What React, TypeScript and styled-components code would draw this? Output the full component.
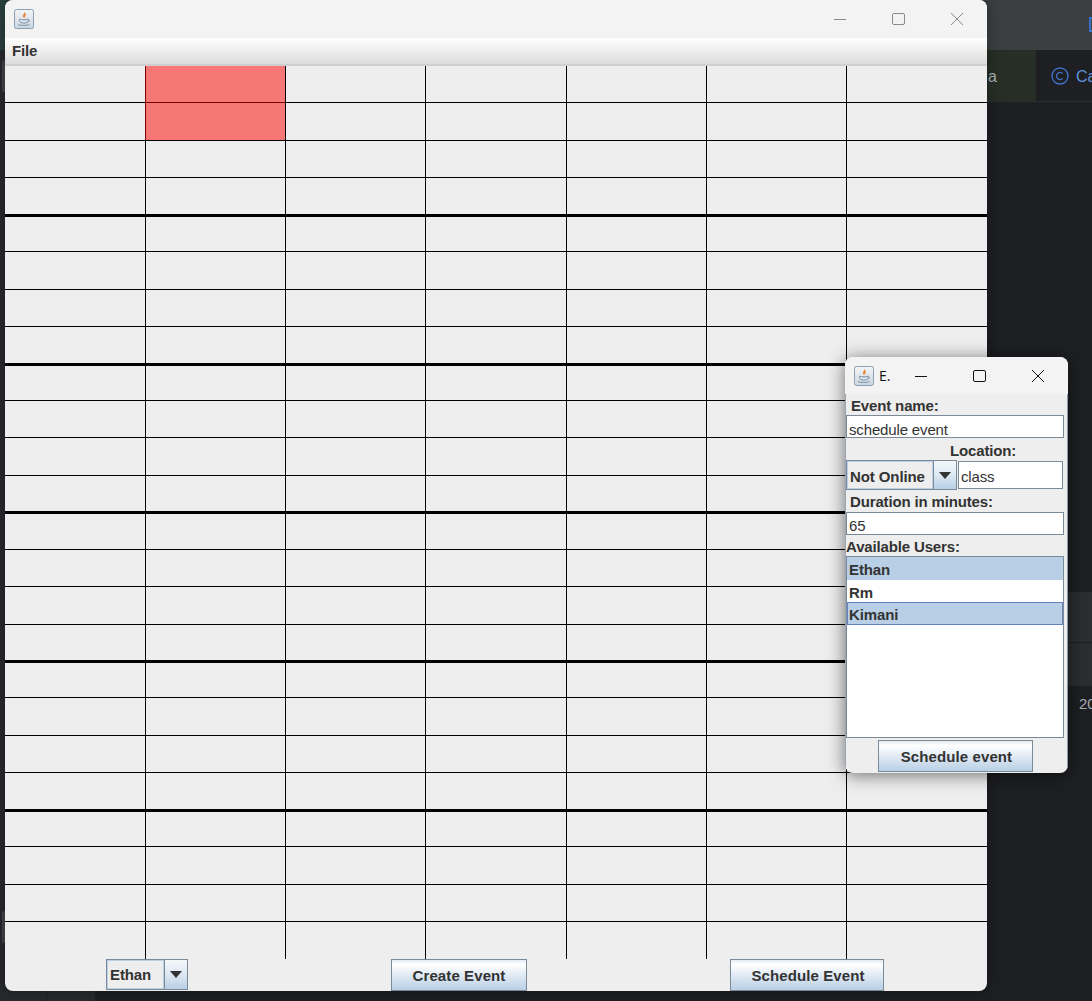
import React from 'react'
import styled, { createGlobalStyle } from 'styled-components'

const ROW_HEIGHTS = [37, 38, 37, 39, 35, 38, 37, 39, 35, 37, 38, 38, 36, 37, 38, 38, 35, 38, 37, 39, 35, 38, 37, 37]
const COLUMN_WIDTHS = [141, 140, 140, 141, 140, 140, 140]
const THICK_ROWS = [3, 7, 11, 15, 19]
const USERS = [
  { name: 'Ethan', height: 23, selected: true, focused: false },
  { name: 'Rm', height: 22, selected: false, focused: false },
  { name: 'Kimani', height: 23, selected: true, focused: true },
]

const JavaIcon: React.FC = () => (
  <IconBox width="20" height="20" viewBox="0 0 20 20">
    <defs>
      <linearGradient id="javaBg" x1="0" y1="0" x2="0" y2="1">
        <stop offset="0" stopColor="#f3f5f7" />
        <stop offset="1" stopColor="#ccd6df" />
      </linearGradient>
    </defs>
    <rect x="0.5" y="0.5" width="19" height="19" rx="2" fill="url(#javaBg)" stroke="#8ba0b4" />
    <path d="M10.5 2.5c.8 1.5-2 3-1.6 4.8.2.8.9 1.5 1.3 2-.1-1 1.8-2 1.7-3.6-.1-1.1-.9-2-1.4-3.2z" fill="#e8873a" />
    <path d="M5.5 10.2c2.5.8 6.5.8 8.8 0v1.3c0 1.6-2 2.7-4.4 2.7s-4.4-1.1-4.4-2.7z" fill="none" stroke="#7d93a8" strokeWidth="1" />
    <path d="M14.3 10.8c1.6-.2 1.9 1.6-.5 2.2" fill="none" stroke="#7d93a8" strokeWidth=".8" />
    <path d="M4 15.6c3 1.1 8.5 1.1 11.5 0" fill="none" stroke="#7d93a8" strokeWidth="1" />
  </IconBox>
)

const WindowControls: React.FC<{ $active?: boolean }> = ({ $active }) => {
  const stroke = $active ? '#111' : '#8a8a8a'
  return (
    <Controls>
      <svg width="14" height="14" viewBox="0 0 14 14">
        <path d="M0 7.5h12" stroke={stroke} strokeWidth="1" />
      </svg>
      <svg width="14" height="14" viewBox="0 0 14 14">
        <rect x="0.5" y="1.5" width="12" height="11" rx="1.5" fill="none" stroke={stroke} strokeWidth="1" />
      </svg>
      <svg width="14" height="14" viewBox="0 0 14 14">
        <path d="M1 1l12 12M13 1L1 13" stroke={stroke} strokeWidth="1" />
      </svg>
    </Controls>
  )
}

interface ComboBoxProps {
  label: string
  textWidth: number
  height: number
  textOffset?: number
}

const ComboBox: React.FC<ComboBoxProps> = ({ label, textWidth, height, textOffset = 0 }) => (
  <Combo $height={height}>
    <ComboText $width={textWidth} $offset={textOffset}>{label}</ComboText>
    <ComboArrow>
      <svg width="14" height="7" viewBox="0 0 14 7">
        <path d="M1 0h12L7 7z" fill="#333" />
      </svg>
    </ComboArrow>
  </Combo>
)

const App: React.FC = () => (
  <Desktop>
    <GlobalStyle />

    <IdeBackdrop>
      <IdeTop>
        <IdeTopMark />
      </IdeTop>
      <IdeBody>
        <IdeSideBar>
          <IdeScrollThumb />
          <IdeScrollThumb />
        </IdeSideBar>
        <IdeSecondBar />
        <IdeMain>
          <IdeTabs>
            <IdeTab $green>a</IdeTab>
            <IdeTab>
              <IdeTabIcon width="18" height="18" viewBox="0 0 18 18">
                <circle cx="9" cy="9" r="8" fill="none" stroke="#3f6fc4" strokeWidth="1.4" />
                <path d="M11.8 6.6a3.6 3.6 0 1 0 0 4.8" fill="none" stroke="#3f6fc4" strokeWidth="1.4" />
              </IdeTabIcon>
              <IdeTabName>Ca</IdeTabName>
            </IdeTab>
          </IdeTabs>
          <IdeEditor />
          <IdePanel />
          <IdePanel $ruled />
          <IdeLog>20</IdeLog>
        </IdeMain>
      </IdeBody>
    </IdeBackdrop>

    <MainWindow>
      <TitleBar $height={38}>
        <JavaIcon />
        <MainControls>
          <WindowControls />
        </MainControls>
      </TitleBar>
      <MenuBar>File</MenuBar>
      <CalendarGrid $rows={ROW_HEIGHTS} $columns={COLUMN_WIDTHS}>
        {ROW_HEIGHTS.map((_, row) =>
          COLUMN_WIDTHS.map((_, column) => (
            <Cell
              key={`${row}-${column}`}
              $thick={THICK_ROWS.includes(row)}
              $lastRow={row === ROW_HEIGHTS.length - 1}
              $lastColumn={column === COLUMN_WIDTHS.length - 1}
            />
          )),
        )}
        <EventBlock />
      </CalendarGrid>
      <Footer>
        <ComboBox label="Ethan" textWidth={57} height={31} />
        <PushButton $width={136}>Create Event</PushButton>
        <PushButton $width={154} $shift>Schedule Event</PushButton>
      </Footer>
    </MainWindow>

    <Dialog>
      <TitleBar $height={37}>
        <JavaIcon />
        <DialogTitle>E.</DialogTitle>
        <DialogControls>
          <WindowControls $active />
        </DialogControls>
      </TitleBar>
      <DialogBody>
        <FieldLabel $height={21} $indent={5}>Event name:</FieldLabel>
        <TextField $height={23} $top={5}>schedule event</TextField>
        <FieldLabel $height={22} $indent={104}>Location:</FieldLabel>
        <LocationRow>
          <ComboBox label="Not Online" textWidth={86} height={30} textOffset={2} />
          <TextField $height={28} $top={6} $grow>class</TextField>
        </LocationRow>
        <FieldLabel $height={22} $indent={4} $lift>Duration in minutes:</FieldLabel>
        <TextField $height={23} $top={4}>65</TextField>
        <FieldLabel $height={21} $indent={0}>Available Users:</FieldLabel>
        <UserList>
          {USERS.map((user) => (
            <UserRow key={user.name} $height={user.height} $selected={user.selected} $focused={user.focused}>
              {user.name}
            </UserRow>
          ))}
        </UserList>
        <DialogFooter>
          <PushButton $width={155} $shift>Schedule event</PushButton>
        </DialogFooter>
      </DialogBody>
    </Dialog>
  </Desktop>
)

export default App

const GlobalStyle = createGlobalStyle`
  html, body {
    margin: 0;
    padding: 0;
    background: #1e1f22;
    overflow: hidden;
  }
  * {
    box-sizing: border-box;
  }
`

const Desktop = styled.div`
  position: relative;
  width: 1092px;
  height: 1001px;
  overflow: hidden;
  font-family: 'Liberation Sans', Arial, sans-serif;
`

const IdeBackdrop = styled.div`
  display: flex;
  flex-direction: column;
  width: 100%;
  height: 100%;
  background: #1e1f22;
`

const IdeTop = styled.div`
  display: flex;
  justify-content: flex-end;
  align-items: center;
  flex: 0 0 50px;
  padding-bottom: 1px;
  background: linear-gradient(90deg, #2c4040 0%, #3c3f41 85%);
`

const IdeTopMark = styled.div`
  width: 3px;
  height: 15px;
  border: 2px solid #3a6fc8;
  border-right: 0;
`

const IdeBody = styled.div`
  display: flex;
  flex: 1;
`

const IdeSideBar = styled.div`
  display: flex;
  flex-direction: column;
  justify-content: space-between;
  flex: 0 0 47px;
  padding: 10px 0 58px 2px;
  background: #28292c;
  border-right: 1px solid #1e1f22;
`

const IdeScrollThumb = styled.div`
  width: 3px;
  height: 32px;
  border-radius: 2px;
  background: #43454a;
`

const IdeSecondBar = styled.div`
  flex: 0 0 48px;
  background: #28292c;
`

const IdeMain = styled.div`
  display: flex;
  flex-direction: column;
  flex: 1;
  min-width: 0;
`

const IdeTabs = styled.div`
  display: flex;
  flex: 0 0 52px;
  padding-left: 892px;
  border-bottom: 1px solid #2b2d30;
`

const IdeTab = styled.div<{ $green?: boolean }>`
  display: flex;
  align-items: center;
  gap: 7px;
  flex: ${(p) => (p.$green ? '0 0 49px' : '1')};
  overflow: hidden;
  padding: 2px 0 0 ${(p) => (p.$green ? '1px' : '15px')};
  background: ${(p) => (p.$green ? '#262e26' : '#1e1f22')};
  color: #a8adb2;
  font-size: 16px;
`

const IdeTabIcon = styled.svg`
  flex: none;
  margin-top: -2px;
`

const IdeTabName = styled.span`
  color: #5c93d8;
`

const IdeEditor = styled.div`
  flex: 0 0 490px;
`

const IdePanel = styled.div<{ $ruled?: boolean }>`
  flex: 0 0 ${(p) => (p.$ruled ? '44px' : '50px')};
  background: #2b2d30;
  border-top: ${(p) => (p.$ruled ? '1px solid #1e1f22' : '0')};
`

const IdeLog = styled.div`
  padding: 9px 0 0 984px;
  color: #a9adb3;
  font-size: 15px;
  white-space: nowrap;
`

const MainWindow = styled.div`
  position: absolute;
  left: 5px;
  top: 0;
  display: flex;
  flex-direction: column;
  width: 982px;
  height: 991px;
  overflow: hidden;
  background: #eeeeee;
  border-radius: 8px;
  box-shadow: 0 0 14px rgba(0, 0, 0, 0.35);
`

const TitleBar = styled.div<{ $height: number }>`
  display: flex;
  align-items: center;
  flex: 0 0 ${(p) => p.$height}px;
  padding-left: 9px;
  background: #f3f3f3;
  color: #111;
`

const IconBox = styled.svg`
  display: block;
  flex: none;
`

const Controls = styled.div`
  display: flex;
  align-items: center;
  gap: 44px;
`

const MainControls = styled.div`
  margin-left: auto;
  padding-right: 23px;
`

const DialogControls = styled.div`
  margin-left: auto;
  padding-right: 23px;
`

const DialogTitle = styled.span`
  margin-left: 5px;
  font-family: 'Open Sans', sans-serif;
  font-size: 14px;
`

const MenuBar = styled.div`
  flex: 0 0 28px;
  padding: 4px 0 0 7px;
  background: linear-gradient(180deg, #ffffff 0%, #dcdcdc 100%);
  border-bottom: 2px solid #cfcfcf;
  color: #333333;
  font-size: 15px;
  font-weight: 700;
  letter-spacing: -0.15px;
`

const CalendarGrid = styled.div<{ $rows: number[]; $columns: number[] }>`
  position: relative;
  display: grid;
  grid-template-rows: ${(p) => p.$rows.map((h) => `${h}px`).join(' ')};
  grid-template-columns: ${(p) => p.$columns.map((w) => `${w}px`).join(' ')};
  flex: none;
`

const Cell = styled.div<{ $thick: boolean; $lastRow: boolean; $lastColumn: boolean }>`
  border-right: ${(p) => (p.$lastColumn ? '0' : '1px solid #000')};
  border-bottom: ${(p) => (p.$lastRow ? '0' : `${p.$thick ? 3 : 1}px solid #000`)};
`

const EventBlock = styled.div`
  position: absolute;
  left: 140px;
  top: 0;
  width: 140px;
  height: 74px;
  background: rgba(255, 0, 0, 0.5);
`

const Footer = styled.div`
  display: flex;
  align-items: flex-start;
  gap: 203px;
  padding-left: 101px;
`

const PushButton = styled.div<{ $width: number; $shift?: boolean }>`
  display: flex;
  align-items: center;
  justify-content: center;
  width: ${(p) => p.$width}px;
  height: 32px;
  padding: 1px 0 0 ${(p) => (p.$shift ? '2px' : '0')};
  background: linear-gradient(180deg, #e2ebf4 0%, #ffffff 15%, #dde8f3 55%, #b8cfe5 100%);
  border: 1px solid #7a8a99;
  color: #333333;
  font-size: 15px;
  font-weight: 700;
  letter-spacing: 0.1px;
`

const Combo = styled.div<{ $height: number }>`
  display: flex;
  flex: none;
  height: ${(p) => p.$height}px;
  border: 1px solid #7a8a99;
  background: #eeeeee;
`

const ComboText = styled.div<{ $width: number; $offset: number }>`
  display: flex;
  align-items: center;
  width: ${(p) => p.$width}px;
  padding: ${(p) => p.$offset}px 0 0 2px;
  border: 1px solid #b8cfe5;
  color: #333333;
  font-size: 15px;
  font-weight: 700;
  letter-spacing: -0.1px;
`

const ComboArrow = styled.div`
  display: flex;
  align-items: center;
  justify-content: center;
  width: 23px;
  border-left: 1px solid #7a8a99;
  background: linear-gradient(180deg, #f4f7fa 0%, #dde8f3 50%, #b8cfe5 100%);
`

const Dialog = styled.div`
  position: absolute;
  left: 845px;
  top: 357px;
  display: flex;
  flex-direction: column;
  width: 223px;
  height: 416px;
  overflow: hidden;
  background: #eeeeee;
  border-radius: 8px;
  box-shadow: 0 2px 18px rgba(0, 0, 0, 0.55);
`

const DialogBody = styled.div`
  display: flex;
  flex-direction: column;
  flex: 1;
  padding-right: 3px;
  border-left: 1px solid #9aa6b2;
  border-right: 1px solid #8b98a8;
`

const FieldLabel = styled.div<{ $height: number; $indent: number; $lift?: boolean }>`
  display: flex;
  align-items: flex-end;
  height: ${(p) => p.$height}px;
  padding: 0 0 ${(p) => (p.$lift ? '2px' : '1px')} ${(p) => p.$indent}px;
  color: #333333;
  font-size: 15px;
  font-weight: 700;
  letter-spacing: -0.15px;
  white-space: nowrap;
`

const TextField = styled.div<{ $height: number; $top: number; $grow?: boolean }>`
  display: flex;
  align-items: flex-start;
  flex: ${(p) => (p.$grow ? '1' : 'none')};
  height: ${(p) => p.$height}px;
  padding: ${(p) => p.$top}px 0 0 2px;
  background: #ffffff;
  border: 1px solid #7a8a99;
  color: #333333;
  font-size: 15px;
  letter-spacing: -0.15px;
`

const LocationRow = styled.div`
  display: flex;
  align-items: center;
  gap: 1px;
  height: 30px;
  padding-right: 1px;
`

const UserList = styled.div`
  flex: 0 0 182px;
  background: #ffffff;
  border: 1px solid #7a8a99;
`

const UserRow = styled.div<{ $height: number; $selected: boolean; $focused: boolean }>`
  display: flex;
  align-items: center;
  height: ${(p) => p.$height}px;
  padding: 2px 0 0 ${(p) => (p.$focused ? '1px' : '2px')};
  background: ${(p) => (p.$selected ? '#b8cfe5' : '#ffffff')};
  border: ${(p) => (p.$focused ? '1px solid #6382bf' : '0')};
  color: #333333;
  font-size: 15px;
  font-weight: 700;
  letter-spacing: -0.1px;
`

const DialogFooter = styled.div`
  display: flex;
  justify-content: center;
  padding: 2px 0 0 1px;
`
